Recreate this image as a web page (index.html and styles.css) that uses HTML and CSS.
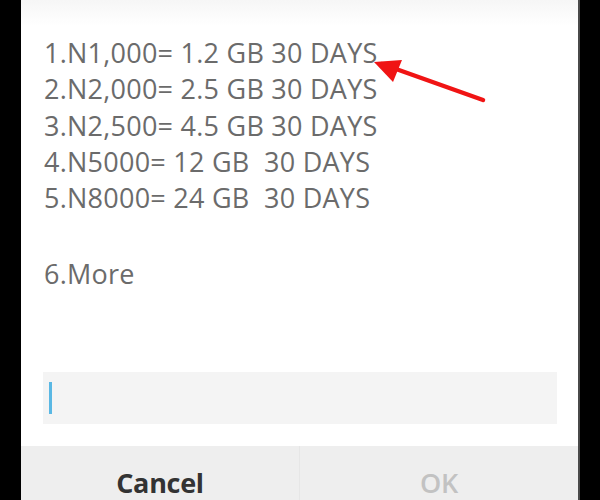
FILE: index.html
```html
<!DOCTYPE html>
<html>
<head>
<meta charset="utf-8">
<link rel="stylesheet" href="styles.css">
</head>
<body>
<div class="screen">
  <div class="dialog">
    <div class="top-shade"></div>
    <div class="message">
      <div class="line">1.N1,000= 1.2 GB 30 DAYS</div>
      <div class="line">2.N2,000= 2.5 GB 30 DAYS</div>
      <div class="line">3.N2,500= 4.5 GB 30 DAYS</div>
      <div class="line">4.N5000= 12 GB&nbsp; 30 DAYS</div>
      <div class="line">5.N8000= 24 GB&nbsp; 30 DAYS</div>
      <div class="line blank">&nbsp;</div>
      <div class="line more">6.More</div>
    </div>
    <div class="input-wrap">
      <div class="input"><span class="caret"></span></div>
    </div>
    <div class="buttons">
      <div class="btn cancel">Cancel</div>
      <div class="btn ok">OK</div>
    </div>
    <svg class="arrow" width="130" height="60" viewBox="0 0 130 60">
      <line x1="123" y1="52" x2="22" y2="16" stroke="#f01414" stroke-width="4.5" stroke-linecap="round"/>
      <polygon points="14,14 42,12 33,34" fill="#f01414"/>
    </svg>
  </div>
</div>
</body>
</html>
```
FILE: styles.css
```css
html, body {
  margin: 0;
  padding: 0;
  background: #000;
  width: 600px;
  height: 500px;
  overflow: hidden;
}
.screen {
  display: flex;
  height: 500px;
  padding: 0 20px 0 21px;
  box-sizing: border-box;
}
.dialog {
  position: relative;
  flex: 1;
  background: #fff;
  display: flex;
  flex-direction: column;
  border-right: 2px solid #4a4a4a;
  font-family: "Open Sans", "Noto Sans", sans-serif;
}
.top-shade {
  position: absolute;
  left: 0;
  right: 0;
  top: 0;
  height: 26px;
  background: linear-gradient(#f6f6f6, #fff);
}
.message {
  position: relative;
  padding: 35px 0 0 23px;
  color: #6b6b6b;
  font-size: 27px;
  line-height: 36.3px;
  letter-spacing: 0.25px;
  flex: 1;
}
.line {
  white-space: pre;
}
.blank {
  height: 40px;
}
.input-wrap {
  padding: 0 21px 0 22px;
}
.input {
  height: 52px;
  background: #f4f4f4;
  display: flex;
  align-items: center;
  padding-left: 6px;
}
.caret {
  width: 3px;
  height: 32px;
  background: #5ab8e4;
}
.buttons {
  margin-top: 22px;
  height: 54px;
  display: flex;
  background: #eeeeee;
}
.btn {
  flex: 1;
  display: flex;
  justify-content: center;
  align-items: flex-end;
  padding-bottom: 4px;
  font-size: 27px;
  line-height: 27px;
  font-weight: 700;
  letter-spacing: -0.3px;
}
.cancel {
  color: #333;
  border-right: 1px solid #e6e6e6;
}
.ok {
  color: #c2c2c2;
  font-weight: 600;
}
.arrow {
  position: absolute;
  left: 339px;
  top: 48px;
}
```
